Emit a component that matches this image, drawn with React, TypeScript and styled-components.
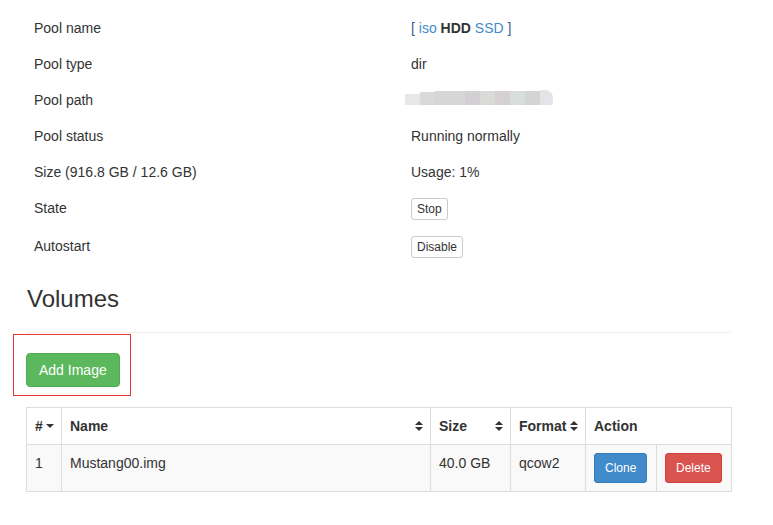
import React from "react";
import styled, { createGlobalStyle } from "styled-components";

const GlobalStyle = createGlobalStyle`
  html, body {
    margin: 0;
    padding: 0;
    background: #fff;
  }
  body {
    font-family: "Liberation Sans", Arial, Helvetica, sans-serif;
    font-size: 14px;
    line-height: 20px;
    color: #333;
  }
  * { box-sizing: border-box; }
`;

const Page = styled.div`
  padding: 10px 42px 0 26px;
`;

const InfoTable = styled.table`
  width: 100%;
  border-collapse: collapse;
  border-spacing: 0;
`;

const InfoRow = styled.tr``;

const InfoCell = styled.td<{ $label?: boolean }>`
  padding: 8px;
  line-height: 20px;
  vertical-align: top;
  width: ${(p) => (p.$label ? "377px" : "auto")};
`;

const Link = styled.a`
  color: #428bca;
  text-decoration: none;
`;

const Bracket = styled.span`
  color: #3d5f86;
`;

const Strong = styled.strong`
  font-weight: 700;
  color: #333;
`;

const XsButton = styled.button`
  display: inline-block;
  font-family: inherit;
  font-size: 12px;
  line-height: 18px;
  padding: 1px 5px;
  color: #333;
  background: #fff;
  border: 1px solid #ccc;
  border-radius: 3px;
  cursor: pointer;
`;

const Mask = styled.div`
  display: flex;
  align-items: flex-end;
  height: 15px;
  margin-left: -6px;
`;

const MaskBlock = styled.div<{ $w: number; $h: number; $c: string; $round?: boolean }>`
  width: ${(p) => p.$w}px;
  height: ${(p) => p.$h}px;
  background: ${(p) => p.$c};
  border-top-right-radius: ${(p) => (p.$round ? "8px" : "0")};
  border-bottom-right-radius: ${(p) => (p.$round ? "3px" : "0")};
`;

const SectionHeader = styled.div`
  padding: 20px 0 20px 1px;
  border-bottom: 1px solid #eee;
`;

const Heading = styled.h3`
  margin: 0;
  font-size: 24px;
  font-weight: 500;
  line-height: 1.1;
  color: #333;
`;

const Toolbar = styled.div`
  margin: 20px 0 20px;
  display: flex;
`;

const Highlight = styled.div`
  position: relative;
`;

const HighlightFrame = styled.span`
  position: absolute;
  top: -19px;
  left: -13px;
  width: 118px;
  height: 62px;
  border: 1px solid #e53935;
  pointer-events: none;
`;

const Button = styled.button<{ $variant: "success" | "primary" | "danger"; $small?: boolean }>`
  display: inline-block;
  font-family: inherit;
  font-size: ${(p) => (p.$small ? "12px" : "14px")};
  line-height: ${(p) => (p.$small ? "18px" : "20px")};
  padding: ${(p) => (p.$small ? "5px 10px" : "6px 12px")};
  border-radius: ${(p) => (p.$small ? "3px" : "4px")};
  color: #fff;
  cursor: pointer;
  background: ${(p) =>
    p.$variant === "success" ? "#5cb85c" : p.$variant === "primary" ? "#428bca" : "#d9534f"};
  border: 1px solid
    ${(p) =>
      p.$variant === "success" ? "#4cae4c" : p.$variant === "primary" ? "#357ebd" : "#d43f3a"};
`;

const DataTable = styled.table`
  width: 100%;
  table-layout: fixed;
  border-collapse: collapse;
  border-spacing: 0;
  border: 1px solid #ddd;
`;

const HeadCell = styled.th`
  padding: 8px 7px 8px 8px;
  border: 1px solid #ddd;
  text-align: left;
  font-weight: 700;
  line-height: 20px;
  background: #fff;
`;

const HeadInner = styled.div`
  display: flex;
  align-items: center;
  justify-content: space-between;
  gap: 3px;
  white-space: nowrap;
`;

const BodyRow = styled.tr`
  background: #f9f9f9;
`;

const BodyCell = styled.td`
  padding: 8px;
  border: 1px solid #ddd;
  vertical-align: top;
  line-height: 20px;
`;

const SortIcon = () => (
  <svg width="8" height="10" viewBox="0 0 8 10">
    <path d="M0 4 L4 0 L8 4 Z" fill="#333" />
    <path d="M0 6 L8 6 L4 10 Z" fill="#333" />
  </svg>
);

const CaretIcon = () => (
  <svg width="8" height="4" viewBox="0 0 8 4">
    <path d="M0 0 L8 0 L4 4 Z" fill="#333" />
  </svg>
);

const maskBlocks = [
  { w: 15, h: 11, c: "#e8e6e8" },
  { w: 15, h: 13, c: "#d9d9d9" },
  { w: 30, h: 14, c: "#d6d6d6" },
  { w: 15, h: 14, c: "#d2d0d2" },
  { w: 15, h: 14, c: "#dadad9" },
  { w: 15, h: 14, c: "#d5d1d1" },
  { w: 15, h: 14, c: "#d8dede" },
  { w: 15, h: 14, c: "#d4d4d4" },
  { w: 13, h: 15, c: "#e3e4e7", round: true },
];

export default function App() {
  return (
    <Page>
      <GlobalStyle />
      <InfoTable>
        <tbody>
          <InfoRow>
            <InfoCell $label>Pool name</InfoCell>
            <InfoCell>
              <Bracket>[</Bracket> <Link href="#">iso</Link> <Strong>HDD</Strong>{" "}
              <Link href="#">SSD</Link> <Bracket>]</Bracket>
            </InfoCell>
          </InfoRow>
          <InfoRow>
            <InfoCell $label>Pool type</InfoCell>
            <InfoCell>dir</InfoCell>
          </InfoRow>
          <InfoRow>
            <InfoCell $label>Pool path</InfoCell>
            <InfoCell>
              <Mask>
                {maskBlocks.map((b, i) => (
                  <MaskBlock key={i} $w={b.w} $h={b.h} $c={b.c} $round={b.round} />
                ))}
              </Mask>
            </InfoCell>
          </InfoRow>
          <InfoRow>
            <InfoCell $label>Pool status</InfoCell>
            <InfoCell>Running normally</InfoCell>
          </InfoRow>
          <InfoRow>
            <InfoCell $label>Size (916.8 GB / 12.6 GB)</InfoCell>
            <InfoCell>Usage: 1%</InfoCell>
          </InfoRow>
          <InfoRow>
            <InfoCell $label>State</InfoCell>
            <InfoCell>
              <XsButton>Stop</XsButton>
            </InfoCell>
          </InfoRow>
          <InfoRow>
            <InfoCell $label>Autostart</InfoCell>
            <InfoCell>
              <XsButton>Disable</XsButton>
            </InfoCell>
          </InfoRow>
        </tbody>
      </InfoTable>

      <SectionHeader>
        <Heading>Volumes</Heading>
      </SectionHeader>

      <Toolbar>
        <Highlight>
          <Button $variant="success">Add Image</Button>
          <HighlightFrame />
        </Highlight>
      </Toolbar>

      <DataTable>
        <colgroup>
          <col style={{ width: 35 }} />
          <col style={{ width: 369 }} />
          <col style={{ width: 80 }} />
          <col style={{ width: 75 }} />
          <col style={{ width: 71 }} />
          <col style={{ width: 75 }} />
        </colgroup>
        <thead>
          <tr>
            <HeadCell>
              <HeadInner>
                #<CaretIcon />
              </HeadInner>
            </HeadCell>
            <HeadCell>
              <HeadInner>
                Name
                <SortIcon />
              </HeadInner>
            </HeadCell>
            <HeadCell>
              <HeadInner>
                Size
                <SortIcon />
              </HeadInner>
            </HeadCell>
            <HeadCell>
              <HeadInner>
                Format
                <SortIcon />
              </HeadInner>
            </HeadCell>
            <HeadCell colSpan={2}>Action</HeadCell>
          </tr>
        </thead>
        <tbody>
          <BodyRow>
            <BodyCell>1</BodyCell>
            <BodyCell>Mustang00.img</BodyCell>
            <BodyCell>40.0 GB</BodyCell>
            <BodyCell>qcow2</BodyCell>
            <BodyCell>
              <Button $variant="primary" $small>
                Clone
              </Button>
            </BodyCell>
            <BodyCell>
              <Button $variant="danger" $small>
                Delete
              </Button>
            </BodyCell>
          </BodyRow>
        </tbody>
      </DataTable>
    </Page>
  );
}
